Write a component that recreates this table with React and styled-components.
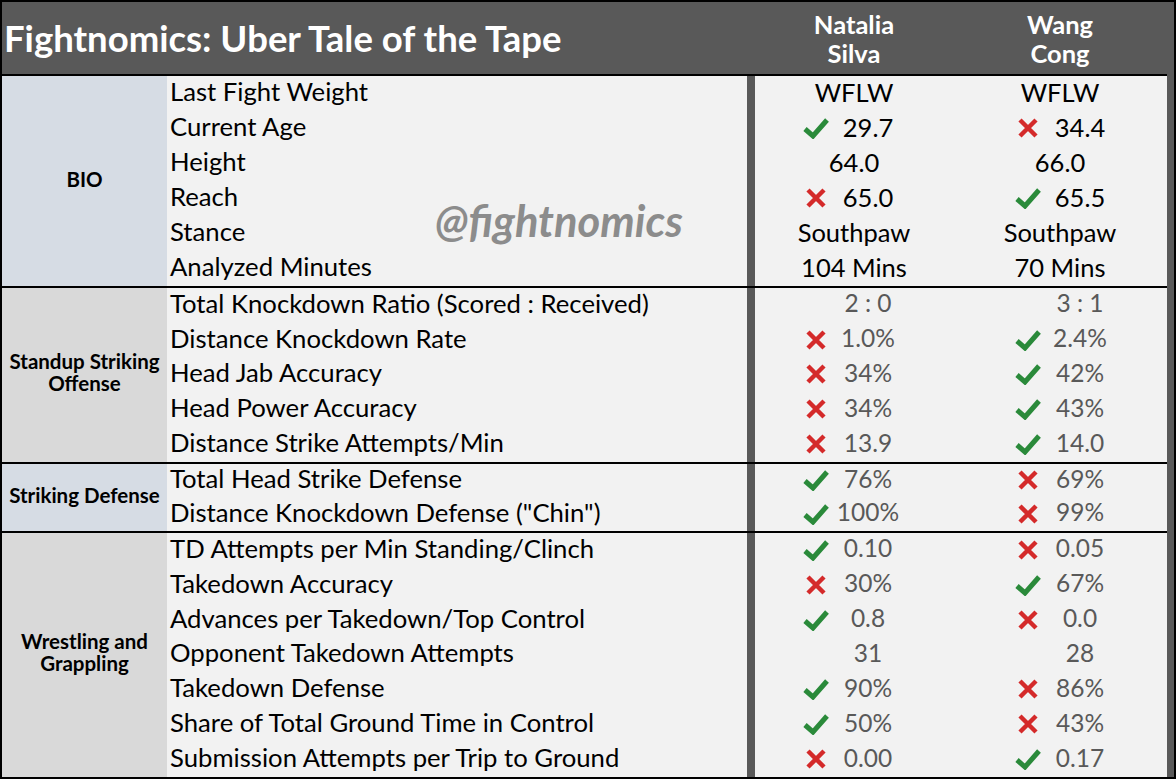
import styled, { createGlobalStyle } from "styled-components";

const GlobalStyle = createGlobalStyle`
  html, body { margin: 0; padding: 0; background: #ffffff; }
  body { font-family: Lato, "Open Sans", sans-serif; }
`;

const Sheet = styled.div`
  position: relative;
  box-sizing: border-box;
  width: 1176px;
  height: 779px;
  border: 2px solid #000;
  background: #595959;
  display: flex;
  flex-direction: column;
`;

const Header = styled.div`
  flex: none;
  height: 72px;
  display: grid;
  grid-template-columns: 749px 206px 206px 1fr;
  align-items: center;
  color: #fff;
  font-weight: 700;
`;

const Title = styled.div`
  font-size: 36.5px;
  padding-left: 2px;
  white-space: nowrap;
`;

const Name = styled.div`
  font-size: 25.5px;
  line-height: 29px;
  text-align: center;
  padding-top: 1px;
`;

const Section = styled.div`
  flex: none;
  width: 1165px;
  height: ${p => p.h}px;
  display: grid;
  grid-template-columns: 165px 580px 8px 412px;
  border-top: ${p => (p.first ? "2px solid #000" : "none")};
  border-bottom: ${p => (p.last ? "none" : "2px solid #000")};
`;

const Category = styled.div`
  background: ${p => p.bg};
  display: flex;
  align-items: center;
  justify-content: center;
  text-align: center;
  font-size: 20.5px;
  font-weight: 700;
  line-height: 22px;
  color: #000;
  padding-bottom: ${p => p.lift}px;
  box-sizing: border-box;
`;

const Rows = styled.div`
  background: #f2f2f2;
  display: grid;
  grid-template-rows: repeat(${p => p.n}, minmax(0, 1fr));
`;

const Label = styled.div`
  font-size: 25.7px;
  line-height: 28px;
  color: #000;
  padding-left: 3px;
  display: flex;
  align-items: center;
  padding-bottom: 5px;
  white-space: nowrap;
`;

const Bar = styled.div`
  background: #595959;
`;

const ValueRow = styled.div`
  display: grid;
  grid-template-columns: 206px 206px;
  font-size: ${p => (p.bio ? 25.5 : 24.5)}px;
  line-height: 28px;
  padding-bottom: 4px;
`;

const Plain = styled.div`
  display: flex;
  align-items: center;
  justify-content: center;
  padding-right: 8px;
  color: #000;
  white-space: nowrap;
`;

const Stat = styled.div`
  display: grid;
  grid-template-columns: 26px 78px;
  align-items: center;
  padding-left: ${p => (p.right ? 54 : 48)}px;
  color: ${p => (p.muted ? "#595959" : "#000")};
`;

const IconSlot = styled.div`
  display: flex;
  align-items: center;
  justify-content: center;
  height: 24px;
  padding-top: 3px;
`;

const StatText = styled.span`
  text-align: center;
  white-space: nowrap;
`;

const Watermark = styled.div`
  position: absolute;
  left: 433px;
  top: 192px;
  font-size: 43.5px;
  font-weight: 700;
  font-style: italic;
  color: #8c8c8c;
`;

const Check = () => (
  <svg width="26" height="22" viewBox="0 0 26 22">
    <path d="M2 12 L10 19 L24 3" fill="none" stroke="#2a8a3a" strokeWidth="5" strokeLinejoin="miter" />
  </svg>
);

const Cross = () => (
  <svg width="22" height="22" viewBox="0 0 22 22">
    <path d="M3 3 L19 19 M19 3 L3 19" fill="none" stroke="#d42a2a" strokeWidth="4.5" />
  </svg>
);

const mark = m => (m === "y" ? <Check /> : m === "n" ? <Cross /> : null);

const sections = [
  {
    name: "BIO",
    bg: "#d6dce4",
    h: 210,
    bio: true,
    lift: 4,
    rows: [
      ["Last Fight Weight", "WFLW", "WFLW"],
      ["Current Age", "29.7", "34.4", "y", "n"],
      ["Height", "64.0", "66.0"],
      ["Reach", "65.0", "65.5", "n", "y"],
      ["Stance", "Southpaw", "Southpaw"],
      ["Analyzed Minutes", "104 Mins", "70 Mins"],
    ],
  },
  {
    name: (
      <>
        Standup Striking
        <br />
        Offense
      </>
    ),
    bg: "#d9d9d9",
    h: 174,
    lift: 6,
    rows: [
      ["Total Knockdown Ratio (Scored : Received)", "2 : 0", "3 : 1", "", ""],
      ["Distance Knockdown Rate", "1.0%", "2.4%", "n", "y"],
      ["Head Jab Accuracy", "34%", "42%", "n", "y"],
      ["Head Power Accuracy", "34%", "43%", "n", "y"],
      ["Distance Strike Attempts/Min", "13.9", "14.0", "n", "y"],
    ],
  },
  {
    name: "Striking Defense",
    bg: "#d6dce4",
    h: 67,
    lift: 6,
    rows: [
      ["Total Head Strike Defense", "76%", "69%", "y", "n"],
      ['Distance Knockdown Defense ("Chin")', "100%", "99%", "y", "n"],
    ],
  },
  {
    name: (
      <>
        Wrestling and
        <br />
        Grappling
      </>
    ),
    bg: "#d9d9d9",
    h: 244,
    lift: 6,
    rows: [
      ["TD Attempts per Min Standing/Clinch", "0.10", "0.05", "y", "n"],
      ["Takedown Accuracy", "30%", "67%", "n", "y"],
      ["Advances per Takedown/Top Control", "0.8", "0.0", "y", "n"],
      ["Opponent Takedown Attempts", "31", "28", "", ""],
      ["Takedown Defense", "90%", "86%", "y", "n"],
      ["Share of Total Ground Time in Control", "50%", "43%", "y", "n"],
      ["Submission Attempts per Trip to Ground", "0.00", "0.17", "n", "y"],
    ],
  },
];

function Value({ text, m, right, bio }) {
  if (bio && m === undefined) return <Plain>{text}</Plain>;
  return (
    <Stat right={right} muted={!bio}>
      <IconSlot>{mark(m)}</IconSlot>
      <StatText>{text}</StatText>
    </Stat>
  );
}

export default function App() {
  return (
    <>
      <GlobalStyle />
      <Sheet>
        <Header>
          <Title>Fightnomics: Uber Tale of the Tape</Title>
          <Name>
            Natalia
            <br />
            Silva
          </Name>
          <Name>
            Wang
            <br />
            Cong
          </Name>
        </Header>
        {sections.map((s, i) => (
          <Section key={i} h={s.h} first={i === 0} last={i === sections.length - 1}>
            <Category bg={s.bg} lift={s.lift}>{s.name}</Category>
            <Rows n={s.rows.length}>
              {s.rows.map(r => (
                <Label key={r[0]}>{r[0]}</Label>
              ))}
            </Rows>
            <Bar />
            <Rows n={s.rows.length}>
              {s.rows.map(r => (
                <ValueRow key={r[0]} bio={s.bio}>
                  <Value text={r[1]} m={r[3]} bio={s.bio} />
                  <Value text={r[2]} m={r[4]} bio={s.bio} right />
                </ValueRow>
              ))}
            </Rows>
          </Section>
        ))}
        <Watermark>@fightnomics</Watermark>
      </Sheet>
    </>
  );
}
